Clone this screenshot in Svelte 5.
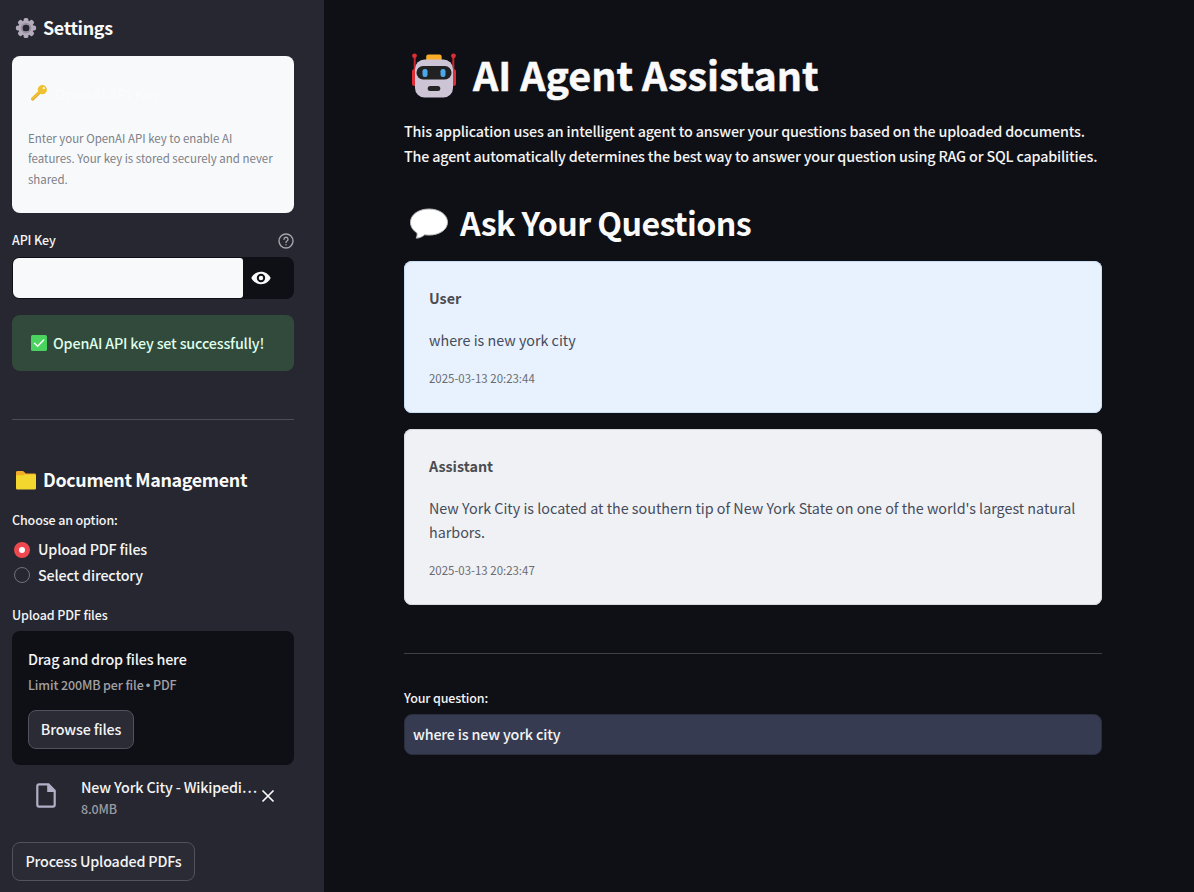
<script>
  const messages = [
    { role: 'User', kind: 'user', text: 'where is new york city', time: '2025-03-13 20:23:44' },
    {
      role: 'Assistant',
      kind: 'assistant',
      text: "New York City is located at the southern tip of New York State on one of the world's largest natural harbors.",
      time: '2025-03-13 20:23:47'
    }
  ];
  const options = ['Upload PDF files', 'Select directory'];
  let selected = $state(0);
  let question = $state('where is new york city');
  const teeth = [0, 45, 90, 135, 180, 225, 270, 315];
</script>

<div class="app">
  <aside>
    <h2 class="side-title first">
      <svg width="22" height="22" viewBox="0 0 22 22">
        {#each teeth as angle}
          <rect x="8.6" y="0.9" width="4.8" height="5.5" rx="1.9" fill="#b4acbc" transform="rotate({angle} 11 11)" />
        {/each}
        <circle cx="11" cy="11" r="5.6" fill="none" stroke="#b4acbc" stroke-width="4" />
        <circle cx="11" cy="11" r="4.6" fill="none" stroke="#998ea4" stroke-width="1.5" />
      </svg>
      <span>Settings</span>
    </h2>

    <section class="key-card">
      <div class="key-title">
        <svg width="18" height="18" viewBox="0 0 18 18">
          <path d="M2.6 15 10 7.8" stroke="#e3a62c" stroke-width="3.2" stroke-linecap="round" />
          <path d="M2.5 14.6 9.800 7.300" stroke="#f1c232" stroke-width="2" stroke-linecap="round" />
          <circle cx="12.3" cy="5.7" r="4.6" fill="#efc02f" />
          <circle cx="13.8" cy="4.2" r="1.1" fill="#f8f9fb" />
        </svg>
        <span>OpenAI API Key</span>
      </div>
      <p>Enter your OpenAI API key to enable AI<br />features. Your key is stored securely and never<br />shared.</p>
    </section>

    <div class="label api">
      <span>API Key</span>
      <svg width="16" height="16" viewBox="0 0 16 16" fill="none" stroke="#a5a5ab" stroke-width="1.4" stroke-linecap="round">
        <circle cx="8" cy="8" r="7" />
        <path d="M6 6.3a2 2 0 1 1 3 1.7c-.7.4-1 .8-1 1.4" />
        <path d="M8 11.6v.1" />
      </svg>
    </div>
    <div class="password">
      <div class="field"></div>
      <svg width="20" height="14" viewBox="0 0 20 14">
        <path d="M10 .8C5.600.8 2 3.400.3 7c1.700 3.600 5.300 6.200 9.700 6.200s8-2.600 9.700-6.200C18 3.400 14.400.8 10 .8Z" fill="#fafafa" />
        <circle cx="10" cy="7" r="3.2" fill="#fafafa" stroke="#0e1117" stroke-width="2" />
      </svg>
    </div>

    <div class="alert">
      <svg width="16" height="16" viewBox="0 0 16 16">
        <rect width="16" height="16" rx="1.6" fill="#4bd35f" />
        <path d="m3.500 8.300 3.100 2.900 6.100-6.100" fill="none" stroke="#fff" stroke-width="1.4" stroke-linecap="round" />
      </svg>
      <span>OpenAI API key set successfully!</span>
    </div>

    <hr class="side-rule" />

    <h2 class="side-title docs">
      <svg width="22" height="22" viewBox="0 0 22 22">
        <path d="M1 3.400Q1 2 2.400 2H7.500Q8.400 2 9 2.700L10.800 4.600H19.600Q21 4.600 21 6V12H1Z" fill="#f4ad28" />
        <path d="M1 7.600Q1 6.300 2.300 6.300H7.600Q8.400 6.300 9 5.800L9.600 5.400H19.700Q21 5.400 21 6.700V19.200Q21 20.500 19.700 20.500H2.300Q1 20.500 1 19.200Z" fill="#f4d72e" />
      </svg>
      <span>Document Management</span>
    </h2>

    <div class="label choose"><span>Choose an option:</span></div>
    <div class="radios">
      {#each options as option, i}
        <button class="radio" onclick={() => (selected = i)}>
          <i class:checked={selected === i}></i><span>{option}</span>
        </button>
      {/each}
    </div>

    <div class="label upload"><span>Upload PDF files</span></div>
    <section class="drop">
      <strong>Drag and drop files here</strong>
      <small>Limit 200MB per file <b>•</b> PDF</small>
      <button class="btn browse">Browse files</button>
    </section>

    <div class="file">
      <svg class="doc" width="20" height="25" viewBox="0 0 20 25">
        <path d="M3.300 1.400H12.500L18.700 7.600V21.800Q18.700 23.600 16.900 23.600H3.100Q1.300 23.600 1.300 21.800V3.200Q1.300 1.400 3.100 1.400Z" fill="none" stroke="#b2b0c7" stroke-width="2.200" />
        <path d="M11.200 1.200V9H19.400Z" fill="#b2b0c7" />
      </svg>
      <div class="file-info">
        <span class="name">New York City - Wikipedi…</span>
        <span class="size">8.0MB</span>
      </div>
      <svg width="14" height="14" viewBox="0 0 14 14" stroke="#fafafa" stroke-width="1.700">
        <path d="m1.500 1.500 11 11m0-11-11 11" />
      </svg>
    </div>

    <button class="btn process">Process Uploaded PDFs</button>
  </aside>

  <main>
    <h1>
      <svg width="46" height="46" viewBox="0 0 46 46">
        <path d="M3.700 3V20M42.300 3V20" stroke="#c9252d" stroke-width="2" />
        <circle cx="3.500" cy="2.800" r="2.400" fill="#dd2e35" />
        <circle cx="42.500" cy="2.800" r="2.400" fill="#dd2e35" />
        <rect x="1" y="16" width="5" height="17" rx="2.500" fill="#dd2e35" />
        <rect x="40" y="16" width="5" height="17" rx="2.500" fill="#dd2e35" />
        <rect x="15.200" y="1.500" width="15.500" height="8" rx="2.300" fill="#f8ac27" />
        <rect x="4" y="6.500" width="38" height="38" rx="9.500" fill="#cdc4d6" />
        <rect x="5.500" y="13" width="35" height="13.500" rx="6.500" fill="#212121" />
        <rect x="11.500" y="16" width="5" height="8" rx="2.200" fill="#4ba7e8" />
        <rect x="29.500" y="16" width="5" height="8" rx="2.200" fill="#4ba7e8" />
        <rect x="16.700" y="33" width="12.600" height="5" rx="2.500" fill="#252326" />
      </svg>
      <span>AI Agent Assistant</span>
    </h1>

    <p class="intro"><span class="l1">This application uses an intelligent agent to answer your questions based on the uploaded documents.</span><br /><span class="l2">The agent automatically determines the best way to answer your question using RAG or SQL capabilities.</span></p>

    <h2 class="ask">
      <svg width="40" height="32" viewBox="0 0 40 32">
        <path d="M20 1C9.500 1 1.500 6.700 1.500 14.200c0 4.800 2.700 8.300 6.500 10.600.2 2 .1 3.900-.9 5.300 3.200.2 6.300-1.400 8.600-3.300 1.400.2 2.800.3 4.300.3 10.500 0 18.500-5.400 18.500-12.900S30.500 1 20 1Z" fill="#fff" stroke="#b8b8ba" stroke-width="1" />
      </svg>
      <span>Ask Your Questions</span>
    </h2>

    {#each messages as m}
      <article class={m.kind}>
        <strong>{m.role}</strong>
        <p>{m.text}</p>
        <time>{m.time}</time>
      </article>
    {/each}

    <hr class="main-rule" />
    <label class="label q" for="question"><span>Your question:</span></label>
    <input id="question" bind:value={question} />
  </main>
</div>

<style>
  :global(body) { background: #0e1117; }
  .app, .app * { box-sizing: border-box; }
  .app {
    display: flex;
    height: 892px;
    overflow: hidden;
    background: #0f1015;
    color: #f4f4f5;
    font-family: "Noto Sans CJK SC", "Noto Sans", sans-serif;
    font-size: 14.32px;
    font-weight: 500;
    letter-spacing: -0.17px;
    font-variant-ligatures: common-ligatures;
  }
  h1, h2, p { margin: 0; }
  h1, h2 { color: #fafafa; }
  button, input { font: inherit; color: inherit; letter-spacing: inherit; }
  svg { flex: none; display: block; }
  span, strong, small, time { white-space: nowrap; }

  aside { width: 324px; height: 892px; padding: 0 30px 0 12px; background: #262730; display: flex; flex-direction: column; flex: none; }
  .side-title { display: flex; align-items: center; gap: 6px; padding-left: 3px; font-size: 17.9px; font-weight: 700; line-height: 28px; flex: none; }
  .side-title.first { height: 56px; }
  .side-title span { letter-spacing: -0.35px; padding-bottom: 2px; }

  .key-card { height: 157px; flex: none; background: #f8f9fb; border-radius: 8px; padding: 24px 16px; }
  .key-title { display: flex; align-items: center; gap: 7px; height: 26px; padding-left: 2px; color: #fbfbfc; font-size: 14.3px; font-weight: 700; }
  .key-card p { margin-top: 21.6px; font-size: 11.47px; font-weight: 400; letter-spacing: 0; line-height: 20.5px; color: #7b8087; white-space: nowrap; }

  .label { display: flex; align-items: center; justify-content: space-between; flex: none; font-size: 12.5px; letter-spacing: -0.13px; height: 20px; line-height: 20px; }
  .label.api { margin-top: 17px; }
  .label.api svg { margin-top: 2px; }
  .password { display: flex; align-items: center; gap: 8px; height: 42px; margin-top: 7px; padding: 1px; border-radius: 8px; background: #0f1015; flex: none; }
  .field { width: 230px; height: 40px; background: #f8f9fb; border-radius: 6px 3px 3px 6px; }

  .alert { height: 56px; margin-top: 16px; border-radius: 8px; background: #314a3b; color: #dffde9; display: flex; align-items: center; gap: 6px; padding-left: 19px; flex: none; }
  .alert span { padding-bottom: 2px; }
  hr { border: 0; height: 1px; width: 100%; flex: none; }
  .side-rule { margin: 48px 0 0; background: #4c4d55; }
  .side-title.docs { margin-top: 45px; height: 30px; }
  .label.choose { margin-top: 15px; }
  .radios { display: flex; flex-direction: column; margin-top: 7px; flex: none; }
  .radio { display: flex; align-items: center; gap: 8px; height: 26px; padding: 0 0 0 2px; border: 0; background: none; }
  .radio span { padding-bottom: 3px; }
  .radio i { width: 16px; height: 16px; border-radius: 50%; border: 1px solid #71727a; margin-bottom: 2px; }
  .radio i.checked { border: 5px solid #ed484f; background: #fff; margin-bottom: 0; }
  .label.upload { margin-top: 16px; }

  .drop { height: 134px; margin-top: 6px; padding: 15px 16px; border-radius: 8px; background: #0f1015; display: flex; flex-direction: column; align-items: flex-start; flex: none; }
  .drop strong { font-weight: 500; line-height: 26px; }
  .drop small { font-size: 12.5px; line-height: 20px; color: #a0a0a4; margin-top: 3px; letter-spacing: -0.13px; }
  .drop small b { font-family: "Liberation Sans", sans-serif; font-size: 13px; line-height: 1; font-weight: 400; margin: 0 0 0 -0.5px; }
  .btn { height: 39px; padding: 0 12px 2px; border: 1px solid #51525b; border-radius: 8px; background: #2b2b36; display: flex; align-items: center; justify-content: center; white-space: nowrap; }
  .browse { width: 106px; margin-top: 15px; }
  .process { width: 183px; margin-top: 20px; flex: none; }
  .file { display: flex; align-items: center; height: 57px; padding: 5px 0 0 24px; flex: none; }
  .doc { margin-bottom: 2px; }
  .file-info { display: flex; flex-direction: column; width: 180px; margin: 2px 0 0 25px; }
  .file-info .name { line-height: 24px; }
  .file-info .size { font-size: 12.5px; line-height: 20px; color: #9b9ba1; }

  main { width: 698px; margin-left: 80px; padding-top: 46px; display: flex; flex-direction: column; }
  h1 { display: flex; align-items: center; gap: 16px; height: 60px; padding-left: 7px; font-size: 39.4px; font-weight: 700; line-height: 60px; letter-spacing: 0.02px; -webkit-text-stroke: 0.5px #fafafa; }
  h1 span { padding-bottom: 4px; }
  .intro { margin-top: 12px; height: 52px; line-height: 25px; white-space: nowrap; }
  .ask { display: flex; align-items: center; gap: 11px; height: 44px; margin-top: 31px; padding-left: 5px; font-size: 32.2px; font-weight: 700; line-height: 44px; letter-spacing: -0.6px; }
  .ask span { padding-bottom: 2px; }
  .ask svg { margin-top: 1px; }
  article { height: 152px; margin-top: 16px; padding: 25px; border-radius: 8px; color: #454b5a; display: flex; flex-direction: column; flex: none; letter-spacing: 0; }
  article.user { background: #e8f2fe; box-shadow: inset 0 0 0 1px #c9dcf6; }
  article.assistant { height: 176px; background: #f0f1f5; box-shadow: inset 0 0 0 1px #d9dae0; }
  article strong { font-size: 14.32px; font-weight: 700; line-height: 24px; color: #4b4c50; }
  article p { margin-top: 18px; font-weight: 400; line-height: 24px; }
  article time { margin-top: 16px; font-size: 11.45px; font-weight: 400; line-height: 20px; color: #6a6c71; }
  .main-rule { margin: 48px 0 0; background: #3f4045; }
  .label.q { margin-top: 34px; }
  input { width: 698px; height: 41px; margin-top: 6px; padding: 0 8px 2px; border: 1px solid #292e3d; border-radius: 8px; background: #363b51; outline: none; }
</style>
